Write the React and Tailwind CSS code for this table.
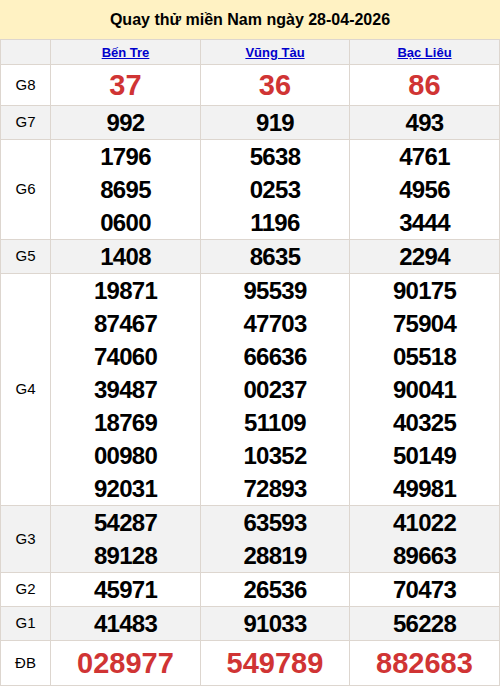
const stations = [
  { name: "Bến Tre" },
  { name: "Vũng Tàu" },
  { name: "Bạc Liêu" },
];

const rows = [
  { label: "G8", h: "h-[41px]", gray: false, big: true, values: [["37"], ["36"], ["86"]] },
  { label: "G7", h: "h-[34px]", gray: true, values: [["992"], ["919"], ["493"]] },
  {
    label: "G6",
    h: "h-[100px]",
    gray: false,
    values: [
      ["1796", "8695", "0600"],
      ["5638", "0253", "1196"],
      ["4761", "4956", "3444"],
    ],
  },
  { label: "G5", h: "h-[34px]", gray: true, values: [["1408"], ["8635"], ["2294"]] },
  {
    label: "G4",
    h: "h-[232px]",
    gray: false,
    values: [
      ["19871", "87467", "74060", "39487", "18769", "00980", "92031"],
      ["95539", "47703", "66636", "00237", "51109", "10352", "72893"],
      ["90175", "75904", "05518", "90041", "40325", "50149", "49981"],
    ],
  },
  {
    label: "G3",
    h: "h-[67px]",
    gray: true,
    values: [
      ["54287", "89128"],
      ["63593", "28819"],
      ["41022", "89663"],
    ],
  },
  { label: "G2", h: "h-[34px]", gray: false, values: [["45971"], ["26536"], ["70473"]] },
  { label: "G1", h: "h-[34px]", gray: true, values: [["41483"], ["91033"], ["56228"]] },
  { label: "ĐB", h: "h-[45px]", gray: false, big: true, values: [["028977"], ["549789"], ["882683"]] },
];

function Cell({ className = "", children }) {
  return (
    <div className={`border-r border-b border-[#ddd6cf] flex flex-col items-center justify-center ${className}`}>
      {children}
    </div>
  );
}

export default function App() {
  return (
    <div className="w-[500px] bg-white font-['Liberation_Sans',Arial,sans-serif] text-black">
      <div className="h-[39px] bg-[#fff2c3] flex items-center justify-center text-[16px] font-bold">
        Quay thử miền Nam ngày 28-04-2026
      </div>

      <div className="grid grid-cols-[50px_150px_149px_150px] border-l border-t border-[#ddd6cf]">
        <Cell className="h-[25px] bg-[#f2f2f2]" />
        {stations.map((s) => (
          <Cell key={s.name} className="h-[25px] bg-[#f2f2f2]">
            <a href="#" className="text-[13px] font-bold text-[#0000cc] underline leading-none">
              {s.name}
            </a>
          </Cell>
        ))}

        {rows.map((r) => (
          <div key={r.label} className="contents">
            <Cell className={`${r.h} ${r.gray ? "bg-[#f2f2f2]" : "bg-white"}`}>
              <span className="text-[15px]">{r.label}</span>
            </Cell>
            {r.values.map((list, i) => (
              <Cell key={i} className={`${r.h} ${r.gray ? "bg-[#f2f2f2]" : "bg-white"}`}>
                {list.map((n, j) =>
                  r.big ? (
                    <span key={j} className="text-[29px] font-bold text-[#d03434] leading-[33px]">
                      {n}
                    </span>
                  ) : (
                    <span key={j} className="text-[24px] font-bold tracking-[-0.7px] leading-[33px]">
                      {n}
                    </span>
                  )
                )}
              </Cell>
            ))}
          </div>
        ))}
      </div>
    </div>
  );
}
